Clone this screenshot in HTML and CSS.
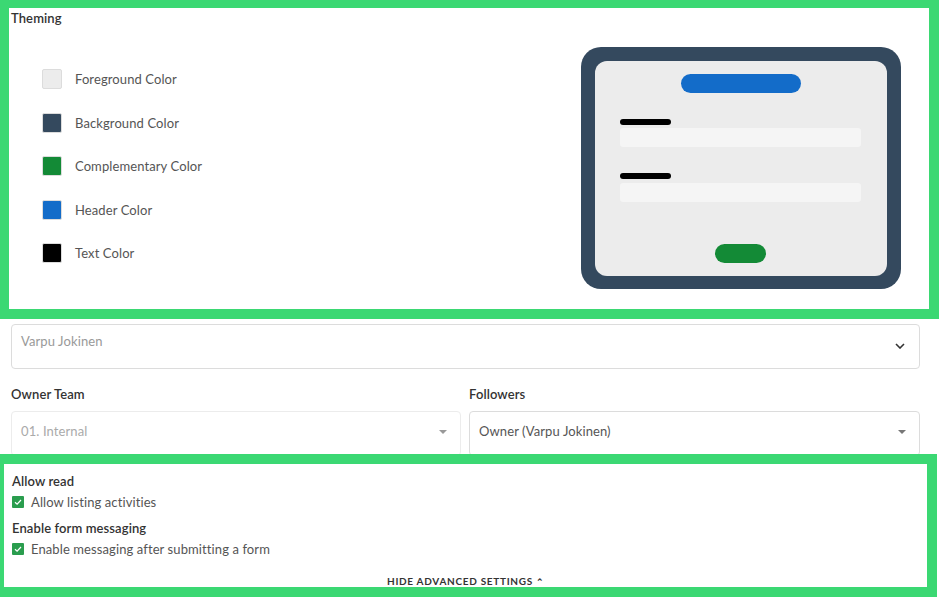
FILE: index.html
```html
<!DOCTYPE html>
<html lang="en">
<head>
<meta charset="utf-8">
<title>Theming</title>
<link rel="stylesheet" href="styles.css">
</head>
<body>
<div class="page">
  <section class="panel panel-theming">
    <h2 class="section-title">Theming</h2>
    <div class="theming-body">
      <ul class="color-list">
        <li class="color-item"><span class="swatch swatch-fg"></span><span class="color-name">Foreground Color</span></li>
        <li class="color-item"><span class="swatch swatch-bg"></span><span class="color-name">Background Color</span></li>
        <li class="color-item"><span class="swatch swatch-comp"></span><span class="color-name">Complementary Color</span></li>
        <li class="color-item"><span class="swatch swatch-header"></span><span class="color-name">Header Color</span></li>
        <li class="color-item"><span class="swatch swatch-text"></span><span class="color-name">Text Color</span></li>
      </ul>
      <svg class="preview" width="320" height="242" viewBox="0 0 320 242" aria-hidden="true">
        <rect x="0" y="0" width="320" height="242" rx="20" fill="#34495e"/>
        <rect x="14" y="14" width="292" height="215" rx="12" fill="#ececec"/>
        <rect x="100" y="27" width="120" height="19" rx="9.5" fill="#136cc9"/>
        <rect x="39" y="72" width="51" height="6" rx="3" fill="#000"/>
        <rect x="39" y="81" width="241" height="19" rx="3" fill="#f5f5f5"/>
        <rect x="39" y="126" width="51" height="6" rx="3" fill="#000"/>
        <rect x="39" y="136" width="241" height="19" rx="3" fill="#f5f5f5"/>
        <rect x="134" y="197" width="51" height="19" rx="9.5" fill="#138a36"/>
      </svg>
    </div>
  </section>

  <section class="fields">
    <div class="select select-owner">
      <span class="select-placeholder">Varpu Jokinen</span>
      <svg class="chevron" width="10" height="6" viewBox="0 0 10 6" aria-hidden="true"><path d="M1 1 L5 5 L9 1" fill="none" stroke="#333" stroke-width="1.6"/></svg>
    </div>
    <div class="field-grid">
      <div class="field">
        <label class="field-label">Owner Team</label>
        <div class="select select-short select-disabled">
          <span class="select-value muted">01. Internal</span>
          <span class="caret caret-light"></span>
        </div>
      </div>
      <div class="field">
        <label class="field-label">Followers</label>
        <div class="select select-short">
          <span class="select-value">Owner (Varpu Jokinen)</span>
          <span class="caret"></span>
        </div>
      </div>
    </div>
  </section>

  <section class="panel panel-advanced">
    <div class="group-title">Allow read</div>
    <div class="check-row"><span class="checkbox"><svg width="12" height="12" viewBox="0 0 12 12" aria-hidden="true"><path d="M3 6.2 L5.1 8.2 L9 4" fill="none" stroke="#fff" stroke-width="1.2"/></svg></span><span>Allow listing activities</span></div>
    <div class="group-title group-gap">Enable form messaging</div>
    <div class="check-row"><span class="checkbox"><svg width="12" height="12" viewBox="0 0 12 12" aria-hidden="true"><path d="M3 6.2 L5.1 8.2 L9 4" fill="none" stroke="#fff" stroke-width="1.2"/></svg></span><span>Enable messaging after submitting a form</span></div>
    <div class="toggle-advanced">Hide advanced settings <span class="toggle-caret">&#x2303;</span></div>
  </section>
</div>
</body>
</html>
```

FILE: styles.css
```css
* { box-sizing: border-box; }

html, body {
  margin: 0;
  padding: 0;
  background: #fff;
}

body {
  font-family: Lato, "Open Sans", "Liberation Sans", sans-serif;
  font-size: 13px;
  line-height: 18px;
  letter-spacing: 0.1px;
  color: #555;
}

.page {
  width: 940px;
  height: 600px;
  overflow: hidden;
}

.panel {
  border-style: solid;
  border-color: #3bd873;
  background: #fff;
}

.panel-theming {
  width: 939px;
  height: 319px;
  border-width: 8px 10px 10px 9px;
  padding: 1px 2px 0;
}

.section-title {
  margin: 0;
  font-size: 13px;
  line-height: 18px;
  font-weight: 600;
  color: #333;
}

.theming-body {
  display: flex;
  justify-content: space-between;
  padding-right: 26px;
}

.color-list {
  list-style: none;
  margin: 42px 0 0;
  padding: 0 0 0 31px;
  display: flex;
  flex-direction: column;
  gap: 23.5px;
}

.color-item {
  display: flex;
  align-items: center;
  gap: 13px;
  height: 20px;
}

.swatch {
  width: 20px;
  height: 20px;
  border: 1px solid #dcdcdc;
  border-radius: 2px;
  flex: none;
}

.swatch-fg { background: #ececec; }
.swatch-bg { background: #34495e; }
.swatch-comp { background: #138a36; }
.swatch-header { background: #136cc9; }
.swatch-text { background: #000; }

.color-name {
  color: #555;
}

.preview {
  display: block;
  margin-top: 20px;
}

.fields {
  height: 135px;
  overflow: hidden;
  padding: 5px 20px 0 11px;
}

.select {
  position: relative;
  height: 45px;
  border: 1px solid #dcdcdc;
  border-radius: 4px;
  padding: 7px 9px 0;
  background: #fff;
}

.select-placeholder {
  color: #999;
}

.chevron {
  position: absolute;
  right: 14px;
  top: 18px;
}

.field-grid {
  display: grid;
  grid-template-columns: 450px 1fr;
  column-gap: 8px;
  margin-top: 16px;
}

.field-label {
  display: block;
  font-weight: 600;
  color: #333;
  margin-bottom: 8px;
}

.select-short {
  padding-top: 10px;
}

.select-disabled {
  border-color: #ececec;
}

.select-value {
  color: #555;
}

.select-value.muted {
  color: #aaa;
}

.caret {
  position: absolute;
  right: 13px;
  top: 18px;
  width: 0;
  height: 0;
  border-left: 4px solid transparent;
  border-right: 4px solid transparent;
  border-top: 4px solid #777;
}

.caret-light {
  border-top-color: #999;
}

.panel-advanced {
  width: 937px;
  height: 143px;
  border-width: 10px 10px 10px 4px;
  padding: 8px 8px 0;
}

.group-title {
  font-weight: 600;
  color: #333;
}

.group-gap {
  margin-top: 8px;
}

.check-row {
  display: flex;
  align-items: center;
  gap: 7px;
  margin-top: 3px;
  color: #555;
}

.checkbox {
  width: 12px;
  height: 12px;
  border-radius: 1px;
  background: #2a9d4e;
  flex: none;
  display: flex;
}

.toggle-advanced {
  margin-top: 16px;
  text-align: center;
  text-transform: uppercase;
  font-size: 10px;
  line-height: 14px;
  font-weight: 700;
  letter-spacing: 0.7px;
  color: #333;
}

.toggle-caret {
  font-size: 9px;
  letter-spacing: 0;
}
```
